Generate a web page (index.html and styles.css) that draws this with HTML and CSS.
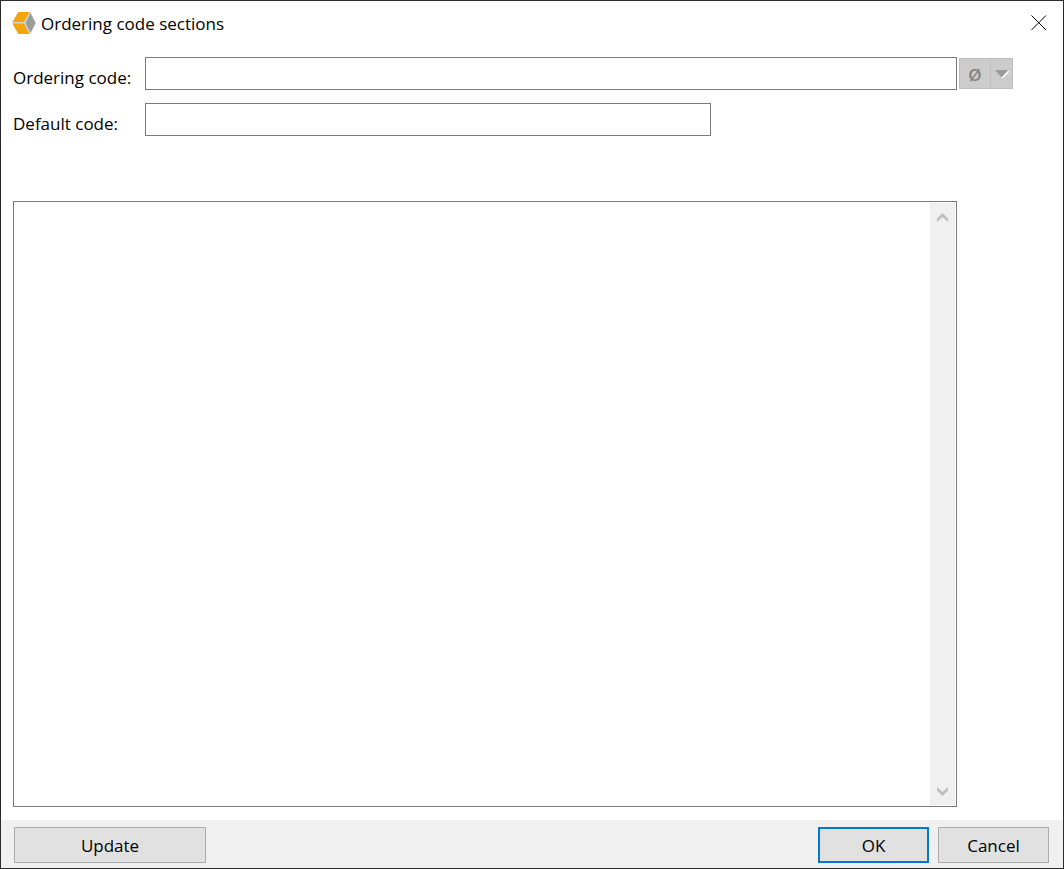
FILE: index.html
```html
<!DOCTYPE html>
<html lang="en">
<head>
<meta charset="utf-8">
<title>Ordering code sections</title>
<link rel="stylesheet" href="styles.css">
</head>
<body>
<form class="dialog">
  <header class="titlebar">
    <svg class="logo" width="24" height="24" viewBox="0 0 24 24" aria-hidden="true">
      <path fill="#d3d6da" d="M6 1H18L24 12L18 23H6L0 12Z"/>
      <path fill="#f5a50a" d="M6.500 1H17.500L12 11H0.500Z"/>
      <path fill="#f5a50a" d="M0.500 12.500H12L17.500 23H6.500Z"/>
      <path fill="#9d9d9d" d="M18.500 2L23.500 12L18.500 22L13.500 12Z"/>
    </svg>
    <h1 class="title">Ordering code sections</h1>
    <button class="close" type="button" aria-label="Close">
      <svg width="16" height="16" viewBox="0 0 16 16"><path d="M.5 .5L15 15M15 .5L.5 15" stroke="#000" stroke-width="1"/></svg>
    </button>
  </header>
  <main class="content">
    <div class="row">
      <label class="label" for="ordering">Ordering code:</label>
      <input class="field" id="ordering" type="text">
      <div class="split">
        <button class="split-main" type="button" disabled>Ø</button>
        <button class="split-arrow" type="button" aria-label="More options" disabled>
          <svg width="14" height="8" viewBox="0 0 14 8"><path fill="#fff" d="M13 1H14V2L8 8H6Z"/><path fill="#9b9b9b" d="M0 0H13L7 7H6Z"/></svg>
        </button>
      </div>
    </div>
    <div class="row">
      <label class="label" for="default">Default code:</label>
      <input class="field field-short" id="default" type="text">
    </div>
    <div class="sections">
      <textarea class="sections-text" aria-label="Sections"></textarea>
      <div class="scrollbar">
        <button class="scroll-button" type="button" aria-label="Scroll up" disabled>
          <svg width="11" height="9" viewBox="0 0 11 9"><path fill="#bfbfbf" d="M5.500 0L11 5.500V9L5.500 4L0 9V5.500Z"/></svg>
        </button>
        <button class="scroll-button" type="button" aria-label="Scroll down" disabled>
          <svg width="11" height="9" viewBox="0 0 11 9"><path fill="#bfbfbf" d="M5.500 9L11 3.500V0L5.500 5L0 0V3.500Z"/></svg>
        </button>
      </div>
    </div>
  </main>
  <footer class="footer">
    <button class="button button-wide" type="button">Update</button>
    <button class="button button-default" type="submit">OK</button>
    <button class="button" type="button">Cancel</button>
  </footer>
</form>
</body>
</html>
```
FILE: styles.css
```css
* {
  box-sizing: border-box;
}

body {
  margin: 0;
  background: #fff;
  color: #000;
  font: 17px/24px "Open Sans", "Noto Sans", sans-serif;
}

button,
input,
textarea {
  margin: 0;
  padding: 0;
  border: 0;
  border-radius: 0;
  outline: 0;
  background: none;
  color: inherit;
  font: inherit;
}

svg {
  display: block;
}

.dialog {
  display: flex;
  flex-direction: column;
  min-height: 100vh;
  border: 1px solid #2b2b2b;
}

.titlebar {
  display: flex;
  align-items: center;
  gap: 5px;
  height: 44px;
  padding: 0 12px 0 11px;
}

.title {
  flex: 1;
  margin: 0;
  padding-top: 2px;
  font-size: 17px;
  font-weight: 400;
}

.close {
  padding: 4px;
}

.content {
  flex: 1;
  display: flex;
  flex-direction: column;
  padding: 12px 50px 13px 12px;
}

.row {
  display: flex;
  margin-bottom: 13px;
}

.label {
  flex: none;
  width: 132px;
  padding-top: 9px;
}

.field {
  flex: 1;
  min-width: 0;
  height: 33px;
  padding: 0 6px;
  border: 1px solid #7a7a7a;
  background: #fff;
}

.field-short {
  margin-right: 302px;
}

.split {
  display: flex;
  height: 31px;
  margin: 1px 0 0 2px;
  border: 1px solid #bfbfbf;
  background: #ccc;
}

.split-main {
  width: 30px;
  padding-top: 2px;
  color: #838383;
  font-weight: 600;
}

.split-arrow {
  display: flex;
  align-items: center;
  justify-content: center;
  width: 22px;
  border-left: 1px solid #bfbfbf;
}

.sections {
  flex: 1;
  display: flex;
  margin: 52px 56px 0 0;
  padding: 1px;
  border: 1px solid #7a7a7a;
}

.sections-text {
  flex: 1;
  padding: 4px 6px;
  resize: none;
}

.scrollbar {
  display: flex;
  flex-direction: column;
  justify-content: space-between;
  width: 25px;
  background: #f0f0f0;
}

.scroll-button {
  display: flex;
  align-items: center;
  justify-content: center;
  height: 28px;
}

.footer {
  display: flex;
  gap: 9px;
  padding: 7px 14px 5px 13px;
  background: #f0f0f0;
}

.button {
  width: 111px;
  height: 36px;
  padding-top: 2px;
  border: 1px solid #adadad;
  background: #e1e1e1;
}

.button-wide {
  width: 192px;
  margin-right: auto;
}

.button-default {
  border: 2px solid #0078d7;
}
```
